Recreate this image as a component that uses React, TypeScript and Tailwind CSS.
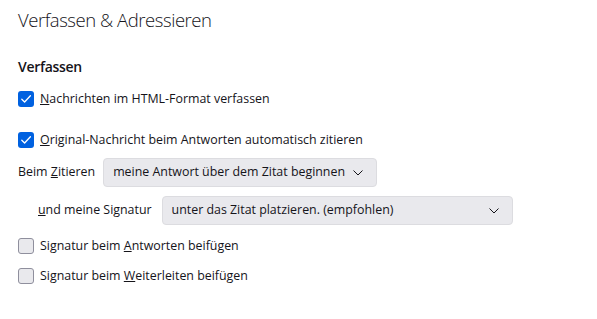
export default function App() {
  const font = { fontFamily: '"Open Sans", "Noto Sans", sans-serif' };
  return (
    <div className="w-[597px] h-[319px] bg-white text-[#15141a] pl-[18px] pt-[6px]" style={font}>
      <h1 className="text-[18.5px] font-light leading-[27px] tracking-[-0.45px]">Verfassen &amp; Adressieren</h1>
      <h2 className="mt-[24px] text-[14px] font-semibold leading-[20px] tracking-[-0.3px]">Verfassen</h2>
      <div className="mt-[14px] flex flex-col text-[12.4px] whitespace-nowrap">
        <Check checked label={<><u>N</u>achrichten im HTML-Format verfassen</>} />
        <div className="mt-[25px]">
          <Check checked label={<><u>O</u>riginal-Nachricht beim Antworten automatisch zitieren</>} />
        </div>
        <div className="mt-[10px] flex items-center gap-[8px]">
          <span><span>Beim </span><u>Z</u>itieren</span>
          <Select width="w-[274px]" value="meine Antwort über dem Zitat beginnen" />
        </div>
        <div className="mt-[9px] pl-[20px] flex items-center gap-[10px]">
          <span><u>u</u>nd meine Signatur</span>
          <Select width="w-[351px]" value="unter das Zitat platzieren. (empfohlen)" />
        </div>
        <div className="mt-[13px]">
          <Check label={<>Signatur beim <u>A</u>ntworten beifügen</>} />
        </div>
        <div className="mt-[14px]">
          <Check label={<>Signatur beim <u>W</u>eiterleiten beifügen</>} />
        </div>
      </div>
    </div>
  );
}

function Check({ checked = false, label }: { checked?: boolean; label: React.ReactNode }) {
  return (
    <label className="flex items-center gap-[6px] h-[16px]">
      {checked ? (
        <span className="w-[16px] h-[16px] shrink-0 rounded-[3px] bg-[#0061e0] flex items-center justify-center">
          <svg width="12" height="12" viewBox="0 0 12 12" fill="none">
            <path d="M1.8 6.2 4.6 9 10.4 2.8" stroke="white" strokeWidth="1.3" strokeLinecap="round" strokeLinejoin="round" />
          </svg>
        </span>
      ) : (
        <span className="w-[16px] h-[16px] shrink-0 rounded-[3px] bg-[#e9e9ed] border border-[#8f8f9d]" />
      )}
      <span className="leading-[16px]">{label}</span>
    </label>
  );
}

function Select({ width, value }: { width: string; value: string }) {
  return (
    <div className={`${width} h-[29px] shrink-0 rounded-[4px] bg-[#e9e9ed] border border-[#dcdce0] flex items-center justify-between pl-[9px] pr-[13px]`}>
      <span>{value}</span>
      <svg width="10" height="6" viewBox="0 0 10 6" fill="none">
        <path d="M0.5 0.5 5 5 9.5 0.5" stroke="#15141a" strokeWidth="1" />
      </svg>
    </div>
  );
}
